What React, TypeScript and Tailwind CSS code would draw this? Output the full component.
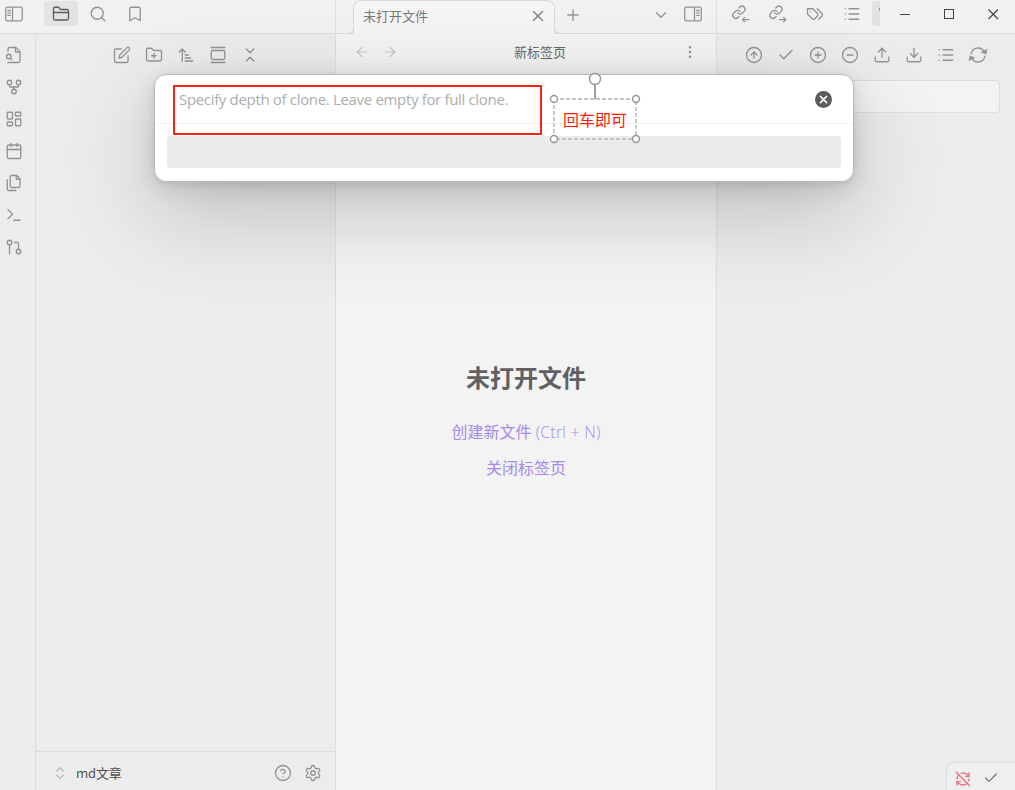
import React from "react";
import {
  FolderClosed, Search, Bookmark, GitFork, LayoutDashboard, Calendar, Terminal,
  GitPullRequest, FolderPlus, GalleryVertical, ChevronsDownUp, X, Plus, ChevronDown, ArrowLeft,
  ArrowRight, EllipsisVertical, Check, List, Upload, Download, CirclePlus, CircleMinus, CircleArrowUp,
  RefreshCwOff, ChevronsUpDown, CircleQuestionMark, Settings,
} from "lucide-react";

type IconProps = { children: React.ReactNode; className?: string };

function Glyph({ children, className = "" }: IconProps) {
  return (
    <svg viewBox="0 0 24 24" fill="none" stroke="currentColor" strokeWidth={1.75} strokeLinecap="round" strokeLinejoin="round" className={"h-[18px] w-[18px] shrink-0 overflow-visible " + className}>
      {children}
    </svg>
  );
}

function SidebarToggle({ flip = false }: { flip?: boolean }) {
  return (
    <svg viewBox="0 0 18 16" fill="none" stroke="currentColor" strokeWidth={1.3} className={flip ? "h-4 w-[18px] -scale-x-100" : "h-4 w-[18px]"}>
      <rect x="0.7" y="1.2" width="16.6" height="13.6" rx="1.8" />
      <path d="M7.5 1.2v13.6M2.4 4.5h3.4M2.4 6.900h3.4M2.4 9.300h3.4" />
    </svg>
  );
}

function LinkArrow({ out = false }: { out?: boolean }) {
  return (
    <Glyph>
      <g transform="translate(-0.6 -0.2) scale(0.82)" strokeWidth={2.1}>
        <path d="M10 13a5 5 0 0 0 7.540.540l3-3a5 5 0 0 0-7.070-7.070l-1.720 1.710" />
        <path d="M14 11a5 5 0 0 0-7.540-.540l-3 3a5 5 0 0 0 7.070 7.070l1.710-1.710" />
      </g>
      {out ? <path d="M14 19.500h8.500M19.500 16.500l3 3-3 3" /> : <path d="M22.500 19.500H14M17 16.500l-3 3 3 3" />}
    </Glyph>
  );
}

function FileSearchIcon() {
  return (
    <Glyph>
      <path d="M4 22h14a2 2 0 0 0 2-2V7.500L14.500 2H6a2 2 0 0 0-2 2v3" />
      <path d="M14 2v6h6" />
      <circle cx="5" cy="14" r="3" />
      <path d="m9 18-1.500-1.500" />
    </Glyph>
  );
}

function FilesIcon() {
  return (
    <Glyph>
      <path d="M15.500 2H8.600c-.4 0-.8.2-1.100.5-.3.3-.5.7-.5 1.100v12.800c0 .4.2.8.5 1.100.3.3.7.5 1.100.5h9.800c.4 0 .8-.2 1.100-.5.3-.3.5-.7.5-1.100V6.500L15.500 2z" />
      <path d="M3 7.600v12.800c0 .4.2.8.5 1.100.3.3.7.5 1.100.5h9.800" />
      <path d="M15 2v5h5" />
    </Glyph>
  );
}

function SyncIcon() {
  return (
    <Glyph>
      <path d="M2.800 10.500a9.400 9.400 0 0 1 17.200-3.400M21.200 13.500a9.400 9.400 0 0 1-17.200 3.400" />
      <path d="M24 4.800l-1.300 6-5.800-2.300zM0 19.200l1.300-6 5.800 2.300z" fill="currentColor" strokeWidth={0.8} />
    </Glyph>
  );
}

function Cell({ children, className = "w-8" }: { children: React.ReactNode; className?: string }) {
  return <div className={"flex shrink-0 items-center justify-center " + className}>{children}</div>;
}

const ribbon = [FileSearchIcon, GitFork, LayoutDashboard, Calendar, FilesIcon, Terminal, GitPullRequest];
const gitActions = [CircleArrowUp, Check, CirclePlus, CircleMinus, Upload, Download, List, SyncIcon];

function LeftSide() {
  return (
    <div className="flex w-[336px] shrink-0 flex-col border-r border-[#dedede] bg-[#ececec]">
      <div className="flex h-[34px] border-b border-[#dcdcdc] bg-[#f1f1f1] pb-[6px] pl-[5px] pt-px">
        <Cell className="w-[18px]"><SidebarToggle /></Cell>
        <Cell className="ml-[21px] h-[25px] w-[34px] rounded bg-[#e3e3e3] text-[#5c5c5c]"><FolderClosed size={18} strokeWidth={1.75} /></Cell>
        <Cell className="ml-px w-[37px]"><Search size={18} strokeWidth={1.75} /></Cell>
        <Cell className="w-[37px]"><Bookmark size={18} strokeWidth={1.75} /></Cell>
      </div>
      <div className="flex min-h-0 flex-1">
        <div className="flex w-9 flex-col border-r border-[#dedede] pt-[5px]">
          {ribbon.map((Icon, i) => (
            <div key={i} className="flex h-8 items-center pl-[5px]"><Icon size={18} strokeWidth={1.75} /></div>
          ))}
        </div>
        <div className="flex flex-1 flex-col">
          <div className="flex h-[42px] justify-center">
            <Cell>
              <Glyph>
                <path d="M11 4H4a2 2 0 0 0-2 2v14a2 2 0 0 0 2 2h14a2 2 0 0 0 2-2v-7" />
                <path d="M18.500 2.500a2.120 2.120 0 0 1 3 3L12 15l-4 1 1-4Z" />
              </Glyph>
            </Cell>
            <Cell><FolderPlus size={18} strokeWidth={1.75} /></Cell>
            <Cell>
              <Glyph><path d="M3 8l4-4 4 4M7 4v16M11 12h4M11 16h7M11 20h10" /></Glyph>
            </Cell>
            <Cell><GalleryVertical size={18} strokeWidth={1.75} /></Cell>
            <Cell><ChevronsDownUp size={18} strokeWidth={1.75} /></Cell>
          </div>
          <div className="flex-1" />
          <div className="flex h-[39px] items-center border-t border-[#dcdcdc] pl-4 pt-[4px]">
            <ChevronsUpDown size={16} strokeWidth={1.75} className="text-[#b5b5b5]" />
            <span className="ml-2 flex-1 text-[13px] leading-5 tracking-[-0.1px] text-[#505050]">md文章</span>
            <CircleQuestionMark size={18} strokeWidth={1.75} />
            <Settings size={18} strokeWidth={1.75} className="ml-3 mr-[13px]" />
          </div>
        </div>
      </div>
    </div>
  );
}

function Center() {
  return (
    <div className="flex w-[381px] shrink-0 flex-col border-r border-[#dedede] bg-[#f3f3f3]">
      <div className="flex h-[34px] border-b border-[#dcdcdc] bg-[#f1f1f1] pl-[17px]">
        <div className="relative -mb-px flex h-[34px] w-[202px] items-center rounded-t-lg border border-b-0 border-[#dadada] bg-[#f4f4f4] pb-[3px] pl-[9px] pr-[7px]">
          <span className="absolute -left-[7px] bottom-0 h-[7px] w-[7px] rounded-br-[6px] border-b border-r border-[#dadada] bg-[#f1f1f1]" />
          <span className="absolute -right-[7px] bottom-0 h-[7px] w-[7px] rounded-bl-[6px] border-b border-l border-[#dadada] bg-[#f1f1f1]" />
          <span className="flex-1 text-[13px] leading-5 text-[#777]">未打开文件</span>
          <X size={18} strokeWidth={1.75} className="text-[#777]" />
        </div>
        <div className="flex flex-1 items-center pb-[4px] pl-[9px]">
          <Plus size={18} strokeWidth={1.75} />
          <ChevronDown size={18} strokeWidth={1.75} className="ml-auto mr-[14px]" />
          <div className="mb-px mr-[14px]"><SidebarToggle flip /></div>
        </div>
      </div>
      <div className="flex h-9 items-center pl-[18px] pr-[18px]">
        <ArrowLeft size={16} strokeWidth={1.75} className="text-[#c4c4c4]" />
        <ArrowRight size={16} strokeWidth={1.75} className="ml-3 text-[#c4c4c4]" />
        <span className="flex-1 text-center text-[13px] leading-5 text-[#666]">新标签页</span>
        <EllipsisVertical size={16} strokeWidth={1.75} />
      </div>
      <div className="flex flex-1 flex-col items-center pt-[290px]">
        <h1 className="text-2xl font-bold leading-9 text-[#606060]">未打开文件</h1>
        <div className="mt-6 flex h-6 items-center text-base text-[#a58aec]">
          <span className="whitespace-pre">创建新文件 </span>
          <span className="font-['Open_Sans',sans-serif] text-base font-light tracking-[0.2px]">(Ctrl + N)</span>
        </div>
        <div className="mt-3 text-base leading-6 text-[#a58aec]">关闭标签页</div>
      </div>
    </div>
  );
}

function RightSide() {
  return (
    <div className="flex min-w-0 flex-1 flex-col bg-[#ececec]">
      <div className="flex h-[34px] shrink-0 border-b border-[#dcdcdc] bg-[#f1f1f1] pb-[6px] pl-[5px] pt-px">
        <Cell className="w-[37px]"><LinkArrow /></Cell>
        <Cell className="w-[37px]"><LinkArrow out /></Cell>
        <Cell className="w-[37px]">
          <Glyph>
            <path d="M9 5H2v7l6.290 6.290c.940.940 2.480.940 3.420 0l3.580-3.580c.940-.940.940-2.480 0-3.420L9 5Z" />
            <path d="M6 9.010V9M15 5l6.300 6.300a2.400 2.400 0 0 1 0 3.400L17 19" />
          </Glyph>
        </Cell>
        <Cell className="w-[37px]"><List size={18} strokeWidth={1.75} /></Cell>
        <div className="ml-[2px] flex h-[25px] w-[10px] items-start justify-end rounded-l bg-[#e2e2e2] pt-[7px]">
          <span className="h-[3px] w-px bg-[#999]" />
        </div>
        <Cell className="ml-[3px] w-[44px] text-[#444]"><svg className="h-4 w-4" viewBox="0 0 16 16"><path d="M3 8.500h10" stroke="currentColor" /></svg></Cell>
        <Cell className="w-[44px] text-[#444]"><svg className="h-4 w-4" viewBox="0 0 16 16"><rect x="3.500" y="3.500" width="9" height="9" fill="none" stroke="currentColor" /></svg></Cell>
        <Cell className="w-[44px] text-[#444]"><svg className="h-4 w-4" viewBox="0 0 16 16"><path d="M3.500 3.500l9.500 9.500M13 3.500L3.500 13" stroke="currentColor" strokeWidth="1.200" /></svg></Cell>
      </div>
      <div className="flex h-[42px] shrink-0 pl-[21px]">
        {gitActions.map((Icon, i) => <Cell key={i}><Icon size={18} strokeWidth={1.75} /></Cell>)}
      </div>
      <div className="ml-4 mr-[15px] mt-1 h-[33px] rounded border border-[#dddddd] bg-[#f3f3f3]" />
      <div className="flex-1" />
      <div className="flex h-[28px] w-[69px] items-center self-end rounded-tl-lg border-l border-t border-[#dcdcdc] bg-[#efefef] pl-2 pt-1">
        <RefreshCwOff size={16} strokeWidth={2.1} className="text-[#e77685]" />
        <Check size={16} strokeWidth={1.75} className="mb-[2px] ml-3 text-[#707070]" />
      </div>
    </div>
  );
}

function Prompt() {
  return (
    <div className="absolute left-[154px] top-[74px] h-[108px] w-[700px] rounded-xl border border-[#b9b9b9] bg-white shadow-[0_2px_7px_rgba(0,0,0,0.07),0_6px_25px_rgba(0,0,0,0.11),0_30px_90px_rgba(0,0,0,0.2)]">
      <div className="flex h-[49px] items-center justify-between border-b border-[#f1f1f1] pl-6 pr-[21px]">
        <span className="font-['Open_Sans',sans-serif] text-[15px] tracking-[-0.33px] text-[#adadad]">Specify depth of clone. Leave empty for full clone.</span>
        <svg viewBox="0 0 17 17" className="h-[17px] w-[17px]">
          <circle cx="8.500" cy="8.500" r="8.500" fill="#5c5c5c" />
          <path d="M5.400 5.400l6.200 6.200M11.600 5.400l-6.200 6.200" stroke="white" strokeWidth="1.500" strokeLinecap="round" />
        </svg>
      </div>
      <div className="mx-3 mt-3 h-8 rounded bg-[#ebebeb]" />
    </div>
  );
}

function Annotations() {
  return (
    <>
      <div className="absolute left-[173px] top-[85px] h-[50px] w-[369px] rounded-[1px] border-2 border-[#fb2213]" />
      <div className="absolute left-[549px] top-[72px] h-[72px] w-[92px]">
        <svg viewBox="0 0 92 72" className="h-full w-full" fill="none">
          <rect x="5" y="27" width="82" height="40" stroke="#c4c4c4" strokeWidth="1.800" strokeDasharray="4 2" />
          <path d="M46 13v14" stroke="#a0a0a0" strokeWidth="2" />
          <g fill="white" stroke="#959595" strokeWidth="1.400">
            <circle cx="46" cy="7" r="5.500" />
            <circle cx="5" cy="27" r="3.500" />
            <circle cx="87" cy="27" r="3.500" />
            <circle cx="5" cy="67" r="3.500" />
            <circle cx="87" cy="67" r="3.500" />
          </g>
        </svg>
        <span className="absolute left-[14px] top-[35px] whitespace-nowrap font-['Noto_Sans_CJK_SC',sans-serif] text-base leading-6 text-[#ff1a0a]">回车即可</span>
      </div>
    </>
  );
}

export default function App() {
  return (
    <div className="relative flex h-[790px] w-[1015px] overflow-hidden font-['Noto_Sans','Noto_Sans_CJK_SC',sans-serif] text-[#929292]">
      <LeftSide />
      <Center />
      <RightSide />
      <Prompt />
      <Annotations />
    </div>
  );
}
